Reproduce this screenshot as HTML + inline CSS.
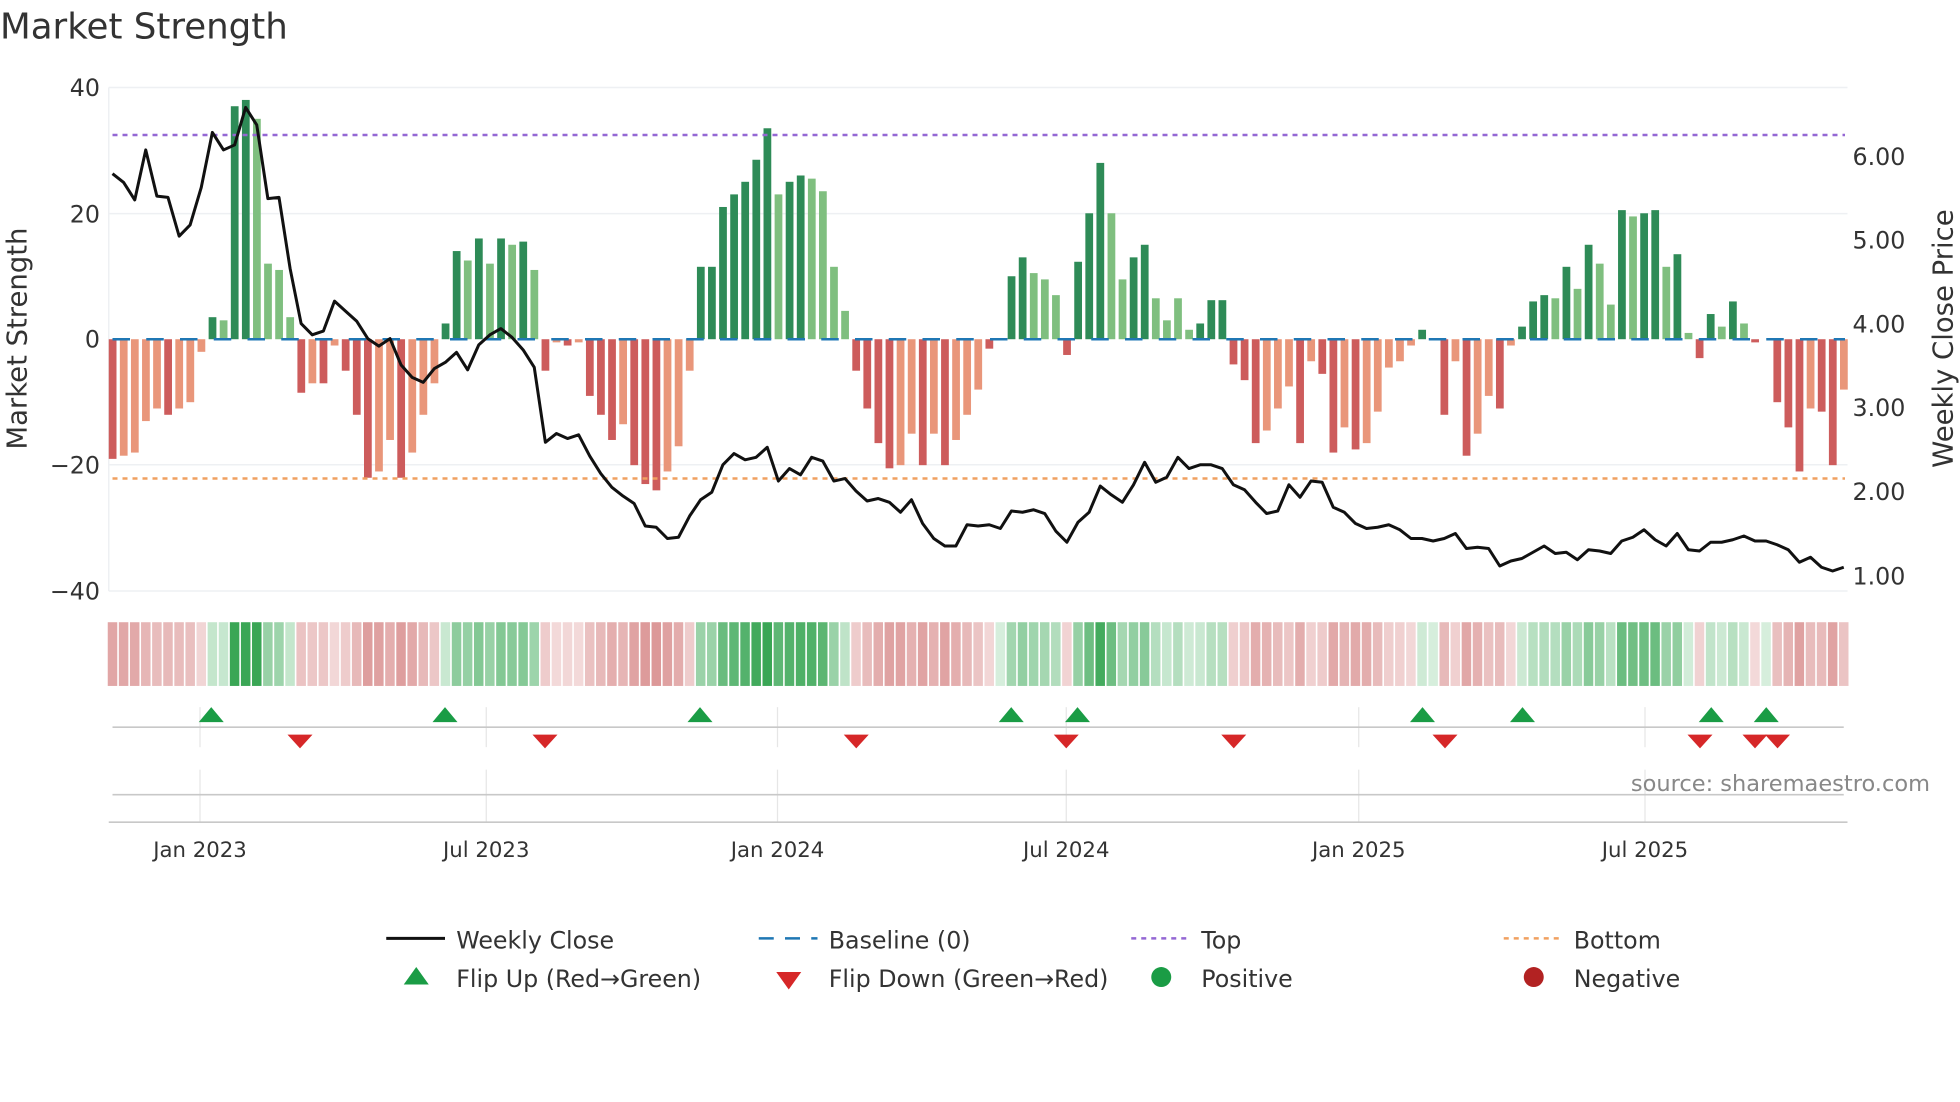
<!DOCTYPE html>
<html><head><meta charset="utf-8"><style>
html,body{margin:0;padding:0;background:#fff;}
svg{display:block;font-family:"DejaVu Sans","Liberation Sans",sans-serif;}
</style></head><body>
<svg id="s" width="1960" height="1102" viewBox="0 0 1568 882" preserveAspectRatio="none" xmlns="http://www.w3.org/2000/svg">
<rect width="1568" height="882" fill="#fff"/>
<text x="0" y="31" font-size="28.5" fill="#333">Market Strength</text>
<g stroke="#eef0f3" stroke-width="1.2">
<line x1="87" y1="70" x2="1478" y2="70"/><line x1="87" y1="171" x2="1478" y2="171"/>
<line x1="87" y1="372" x2="1478" y2="372"/><line x1="87" y1="473" x2="1478" y2="473"/>
<line x1="87" y1="70" x2="87" y2="473"/>
</g>
<g font-size="19" fill="#333" text-anchor="end">
<text x="80" y="77">40</text><text x="80" y="178">20</text><text x="80" y="278">0</text>
<text x="80" y="379">−20</text><text x="80" y="480">−40</text>
</g>
<g font-size="19" fill="#333">
<text x="1482" y="132">6.00</text><text x="1482" y="199">5.00</text><text x="1482" y="266">4.00</text>
<text x="1482" y="333">3.00</text><text x="1482" y="400">2.00</text><text x="1482" y="468">1.00</text>
</g>
<text transform="translate(21,271) rotate(-90)" font-size="22" fill="#333" text-anchor="middle">Market Strength</text>
<text transform="translate(1562,271) rotate(-90)" font-size="22" fill="#333" text-anchor="middle">Weekly Close Price</text>
<g id="bars"></g>
<line x1="90" y1="271.5" x2="1476" y2="271.5" stroke="#1f77b4" stroke-width="2" stroke-dasharray="14,13"/>
<line x1="90" y1="108" x2="1476" y2="108" stroke="#9467d4" stroke-width="2" stroke-dasharray="4,4"/>
<line x1="90" y1="383" x2="1476" y2="383" stroke="#f0a060" stroke-width="2" stroke-dasharray="4,4"/>
<polyline id="price" fill="none" stroke="#111" stroke-width="2.4" stroke-linejoin="round"/>
<g id="heat"></g>
<g stroke="#e6e6e6" stroke-width="1">
<line x1="160" y1="566" x2="160" y2="598"/><line x1="389" y1="566" x2="389" y2="598"/><line x1="622" y1="566" x2="622" y2="598"/>
<line x1="853" y1="566" x2="853" y2="598"/><line x1="1087" y1="566" x2="1087" y2="598"/><line x1="1316" y1="566" x2="1316" y2="598"/>
<line x1="160" y1="616" x2="160" y2="658"/><line x1="389" y1="616" x2="389" y2="658"/><line x1="622" y1="616" x2="622" y2="658"/>
<line x1="853" y1="616" x2="853" y2="658"/><line x1="1087" y1="616" x2="1087" y2="658"/><line x1="1316" y1="616" x2="1316" y2="658"/>
</g>
<line x1="90" y1="582" x2="1475" y2="582" stroke="#c8c8c8" stroke-width="1.3"/>
<line x1="90" y1="636" x2="1475" y2="636" stroke="#c8c8c8" stroke-width="1.3"/>
<line x1="87" y1="658" x2="1478" y2="658" stroke="#c8c8c8" stroke-width="1.3"/>
<g id="flips"></g>
<text x="1544" y="633" font-size="18" fill="#888" text-anchor="end">source: sharemaestro.com</text>
<g font-size="17" fill="#333" text-anchor="middle">
<text x="160" y="686">Jan 2023</text><text x="389" y="686">Jul 2023</text><text x="622" y="686">Jan 2024</text>
<text x="853" y="686">Jul 2024</text><text x="1087" y="686">Jan 2025</text><text x="1316" y="686">Jul 2025</text>
</g>
<g font-size="19" fill="#333">
<line x1="309" y1="751" x2="356" y2="751" stroke="#111" stroke-width="2.4"/><text x="365" y="759">Weekly Close</text>
<line x1="607" y1="751" x2="654" y2="751" stroke="#1f77b4" stroke-width="2" stroke-dasharray="12,9"/><text x="663" y="759">Baseline (0)</text>
<line x1="905" y1="751" x2="952" y2="751" stroke="#9467d4" stroke-width="2" stroke-dasharray="4,4"/><text x="961" y="759">Top</text>
<line x1="1203" y1="751" x2="1250" y2="751" stroke="#f0a060" stroke-width="2" stroke-dasharray="4,4"/><text x="1259" y="759">Bottom</text>
<polygon points="323,788 343,788 333,774" fill="#1a9c45"/><text x="365" y="790">Flip Up (Red→Green)</text>
<polygon points="621,778 641,778 631,792" fill="#d62728"/><text x="663" y="790">Flip Down (Green→Red)</text>
<circle cx="929" cy="782" r="8" fill="#1a9c45"/><text x="961" y="790">Positive</text>
<circle cx="1227" cy="782" r="8" fill="#b22222"/><text x="1259" y="790">Negative</text>
</g>
</svg>
<script>
var NS="http://www.w3.org/2000/svg";
var V=[-19,-18.5,-18,-13,-11,-12,-11,-10,-2,3.5,3,37,38,35,12,11,3.5,-8.5,-7,-7,-1,-5,-12,-22,-21,-16,-22,-18,-12,-7,2.5,14,12.5,16,12,16,15,15.5,11,-5,-0.5,-1,-0.5,-9,-12,-16,-13.5,-20,-23,-24,-21,-17,-5,11.5,11.5,21,23,25,28.5,33.5,23,25,26,25.5,23.5,11.5,4.5,-5,-11,-16.5,-20.5,-20,-15,-20,-15,-20,-16,-12,-8,-1.5,0,10,13,10.5,9.5,7,-2.5,12.3,20,28,20,9.5,13,15,6.5,3,6.5,1.5,2.5,6.2,6.2,-4,-6.5,-16.5,-14.5,-11,-7.5,-16.5,-3.5,-5.5,-18,-14,-17.5,-16.5,-11.5,-4.5,-3.5,-1,1.5,0,-12,-3.5,-18.5,-15,-9,-11,-1,2,6,7,6.5,11.5,8,15,12,5.5,20.5,19.5,20,20.5,11.5,13.5,1,-3,4,2,6,2.5,-0.5,0,-10,-14,-21,-11,-11.5,-20,-8];
var D="dlllldllld"+"lddlllldld"+"ldddlldlll"+"ddldldldld"+"ldldddlddd"+"lllddddddd"+"lddllllddd"+"dlldldllld"+"lddllldddd"+"llddlllldd"+"ddddllldld"+"dldllllldl"+"dldlldlddd"+"ldldlldldd"+"ldlddldldl"+"dddlddl";
var P=[139,146,160,120,157,158,189,180,150,106,120,116,86,100,159,158,215,259,268,265,241,249,257,271,277,271,292,302,306,295,290,282,296,276,268,263,270,280,294,354,347,351,348,365,379,390,397,403,421,422,431,430,413,400,394,372,363,368,366,358,385,375,380,366,369,385,383,393,401,399,402,410,400,419,431,437,437,420,421,420,423,409,410,408,411,425,434,418,410,389,396,402,388,370,386,382,366,375,372,372,375,388,392,402,411,409,388,398,385,386,406,410,419,423,422,420,424,431,431,433,431,427,439,438,439,453,449,447,442,437,443,442,448,440,441,443,433,430,424,432,437,427,440,441,434,434,432,429,433,433,436,440,450,446,454,457,454];
var n=V.length, x0=90, x1=1475, st=(x1-x0)/(n-1);
var bars=document.getElementById("bars"),heat=document.getElementById("heat");
function el(t,a,p){var e=document.createElementNS(NS,t);for(var k in a)e.setAttribute(k,a[k]);p.appendChild(e);return e;}
function mix(a,b,t){var r="#";for(var i=0;i<3;i++){var c=Math.round(a[i]+(b[i]-a[i])*t);r+=(c<16?"0":"")+c.toString(16);}return r;}
for(var i=0;i<n;i++){
 var v=V[i],x=x0+i*st,d=(i<D.length?D[i]:"l")=="d";
 if(v!==0){var y=v>0?271.5-v*5.04:271.5,h=Math.abs(v)*5.04;
  var c=v>0?(d?"#2e8b57":"#7fbf7f"):(d?"#cd5c5c":"#e9967a");
  el("rect",{x:x-3,y:y,width:6.2,height:h,fill:c},bars);}
 var t=Math.min(Math.abs(v)/30,1),hc;
 if(v>=0) hc=mix([214,238,220],[58,166,85],t); else hc=mix([243,218,218],[214,136,136],t);
 el("rect",{x:x-3.8,y:498,width:7.6,height:51,fill:hc},heat);
}
var pts=[],m=P.length,ps=(x1-x0)/(m-1);
for(var j=0;j<m;j++)pts.push((x0+j*ps).toFixed(1)+","+P[j]);
document.getElementById("price").setAttribute("points",pts.join(" "));
var fl=document.getElementById("flips");
[169,356,560,809,862,1138,1218,1369,1413].forEach(function(x){el("polygon",{points:(x-10)+",578 "+(x+10)+",578 "+x+",566",fill:"#1a9c45"},fl);});
[240,436,685,853,987,1156,1360,1404,1422].forEach(function(x){el("polygon",{points:(x-10)+",588 "+(x+10)+",588 "+x+",599",fill:"#d62728"},fl);});
</script>
</body></html>
